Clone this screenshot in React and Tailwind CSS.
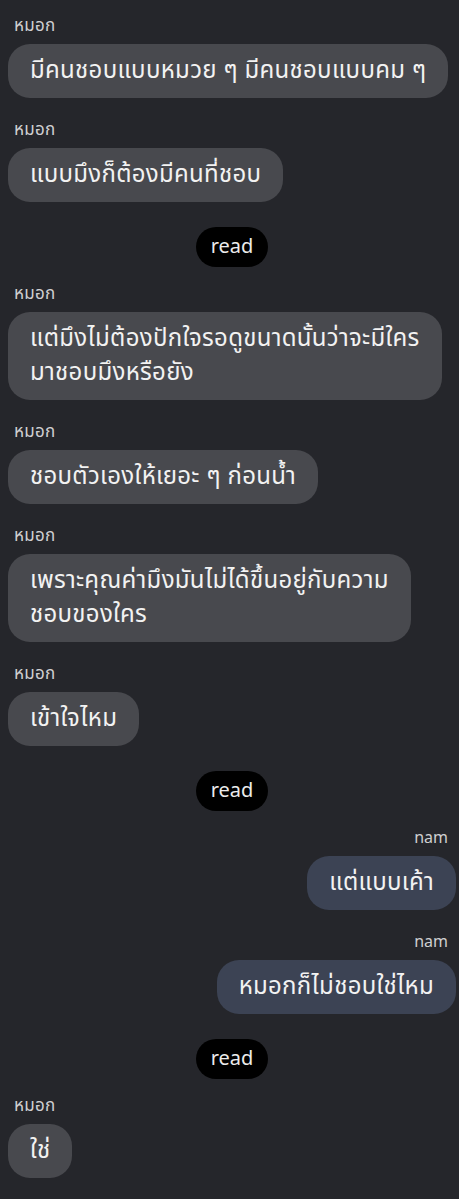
const thai = { fontFamily: '"Noto Sans Thai", "Noto Sans", "DejaVu Sans", sans-serif' };

const messages = [
  { type: "in", name: "หมอก", lines: ["มีคนชอบแบบหมวย ๆ มีคนชอบแบบคม ๆ"] },
  { type: "in", name: "หมอก", lines: ["แบบมึงก็ต้องมีคนที่ชอบ"] },
  { type: "read" },
  { type: "in", name: "หมอก", lines: ["แต่มึงไม่ต้องปักใจรอดูขนาดนั้นว่าจะมีใคร", "มาชอบมึงหรือยัง"] },
  { type: "in", name: "หมอก", lines: ["ชอบตัวเองให้เยอะ ๆ ก่อนน้ำ"] },
  { type: "in", name: "หมอก", lines: ["เพราะคุณค่ามึงมันไม่ได้ขึ้นอยู่กับความ", "ชอบของใคร"] },
  { type: "in", name: "หมอก", lines: ["เข้าใจไหม"] },
  { type: "read" },
  { type: "out", name: "nam", lines: ["แต่แบบเค้า"] },
  { type: "out", name: "nam", lines: ["หมอกก็ไม่ชอบใช่ไหม"] },
  { type: "read" },
  { type: "in", name: "หมอก", lines: ["ใช่"] },
];

function Read() {
  return (
    <div className="flex justify-center">
      <span className="flex h-10 w-[72px] items-center justify-center rounded-full bg-black text-[20px] text-[#ececec]">
        read
      </span>
    </div>
  );
}

function Bubble({ m }) {
  const out = m.type === "out";
  return (
    <div className={out ? "flex flex-col items-end" : "flex flex-col items-start"}>
      <div className={out ? "h-[18px] pr-[8px] text-[16px] leading-[18px] text-[#cfcfd1]" : "h-[18px] pl-[6px] text-[17px] leading-[18px] tracking-[0.3px] text-[#cfcfd1]"}>
        {m.name}
      </div>
      <div
        className={
          (out ? "mt-[9px] bg-[#3c4354]" : "mt-[9px] bg-[#48494e]") +
          " rounded-[22px] px-[22px] py-[10px] text-[24px] leading-[34px] tracking-[0.3px] whitespace-nowrap text-[#f2f2f2]"
        }
      >
        {m.lines.map((l, i) => (
          <div key={i}>{l}</div>
        ))}
      </div>
    </div>
  );
}

export default function App() {
  return (
    <div className="min-h-[1199px] bg-[#25262b] pt-[17px] pb-[20px] pl-2 pr-[3px]" style={thai}>
      {messages.map((m, i) => {
        const prev = messages[i - 1];
        let mt = "";
        if (i > 0) {
          if (m.type === "read") mt = "mt-[25px]";
          else if (prev.type === "read") mt = "mt-[18px]";
          else mt = "mt-[23px]";
        }
        return (
          <div key={i} className={mt}>
            {m.type === "read" ? <Read /> : <Bubble m={m} />}
          </div>
        );
      })}
    </div>
  );
}
